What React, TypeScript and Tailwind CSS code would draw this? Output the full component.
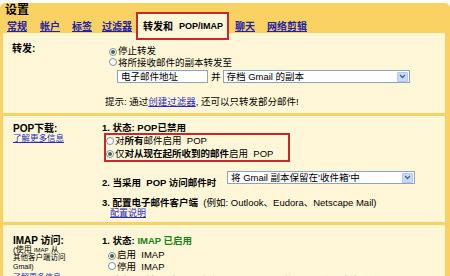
import React from "react";

const Radio = ({ checked }: { checked?: boolean }) => (
  <span className="inline-flex h-[8px] w-[8px] shrink-0 items-center justify-center rounded-full border border-[#7d8fa6] bg-white">
    {checked && <span className="h-[4px] w-[4px] rounded-full bg-[#3a6b3a]" />}
  </span>
);

const Select = ({ text, className }: { text: string; className: string }) => (
  <div
    className={`flex items-center border border-[#8ea3bd] bg-white ${className}`}
  >
    <span className="flex-1 whitespace-nowrap pl-[3px] text-[9.5px] leading-[11px]">
      {text}
    </span>
    <span className="mr-[1px] flex h-[10px] w-[11px] items-center justify-center rounded-[1px] border border-[#b4c8ef] bg-[#c9d9f9]">
      <svg width="7" height="5" viewBox="0 0 7 5">
        <path d="M1 1l2.5 2.5L6 1" stroke="#4d6185" strokeWidth="1.3" fill="none" />
      </svg>
    </span>
  </div>
);

const tabLink = "text-[#2020a8] underline";
const link = "text-[#2a2ac0] underline";

export default function App() {
  return (
    <div className="relative h-[276px] w-[450px] overflow-hidden bg-white font-['Liberation_Sans','Noto_Sans_CJK_SC',sans-serif] text-[9.5px] text-black">
      <div className="mt-[3px] rounded-t-[5px] bg-[#fad163]">
        <div className="h-[15px] pl-[5px] text-[12px] font-bold leading-[14px]">设置</div>
        <div className="flex h-[15px] items-end whitespace-nowrap pl-[7px] text-[10px] font-bold leading-[13px]">
          <a className={tabLink}>常规</a>
          <a className={`ml-[13px] ${tabLink}`}>帐户</a>
          <a className={`ml-[12px] ${tabLink}`}>标签</a>
          <a className={`ml-[10px] ${tabLink}`}>过滤器</a>
          <div className="ml-[4px] flex h-[19px] w-[93px] shrink-0 items-end rounded-t-[3px] bg-[#fff7d7] pl-[7px]">
            <span>转发和</span>
            <span className="ml-[6px] text-[9px]">POP/IMAP</span>
          </div>
          <a className={`ml-[6px] ${tabLink}`}>聊天</a>
          <a className={`ml-[12px] ${tabLink}`}>网络剪辑</a>
        </div>

        <div className="ml-[3px] mr-[5px] bg-[#fff7d7]">
          {/* 转发 */}
          <div className="flex h-[83px] border-b-[3px] border-[#fad163]">
            <div className="w-[99px] shrink-0 pl-[9px] pt-[10px] text-[10px] font-bold leading-[12px]">
              转发:
            </div>
            <div className="flex-1 pt-[12px] leading-[12px]">
              <div className="flex h-[12px] items-center">
                <span className="ml-[7px]"><Radio checked /></span>
                <span className="ml-[1px]">停止转发</span>
              </div>
              <div className="flex h-[12px] items-center">
                <span className="ml-[7px]"><Radio /></span>
                <span className="ml-[1px]">将所接收邮件的副本转发至</span>
              </div>
              <div className="mt-[1px] flex items-center">
                <div className="ml-[15px] h-[13px] w-[91px] border border-[#8ea3bd] bg-white pl-[3px] leading-[11px]">
                  电子邮件地址
                </div>
                <span className="ml-[3px]">并</span>
                <Select text="存档 Gmail 的副本" className="ml-[2px] h-[13px] w-[187px]" />
              </div>
              <div className="ml-[3px] mt-[13px]">
                提示: 通过<a className={link}>创建过滤器</a>, 还可以只转发部分邮件!
              </div>
            </div>
          </div>

          {/* POP */}
          <div className="flex h-[109px] border-b-[3px] border-[#fad163]">
            <div className="w-[99px] shrink-0 pl-[10px] pt-[7px]">
              <div className="text-[10px] font-bold leading-[11px]">POP下载:</div>
              <a className={`block text-[8.5px] leading-[8px] ${link}`}>了解更多信息</a>
            </div>
            <div className="flex-1 pt-[6px] leading-[12px]">
              <div className="font-bold">1. 状态: POP已禁用</div>
              <div className="-mt-[1px] ml-[2px] w-[186px] border-2 border-[#c8282a]">
                <div className="flex h-[12px] items-center">
                  <Radio />
                  <span className="ml-[1px]">
                    对<b>所有</b>邮件启用&nbsp;&nbsp;POP
                  </span>
                </div>
                <div className="flex h-[13px] items-center">
                  <Radio checked />
                  <span className="ml-[1px]">
                    仅<b>对从现在起所收到的邮件</b>启用&nbsp;&nbsp;POP
                  </span>
                </div>
              </div>
              <div className="mt-[9px] flex items-start">
                <div className="mt-[6px] w-[125px] shrink-0 font-bold">
                  2. 当采用&nbsp;&nbsp;POP 访问邮件时
                </div>
                <Select text="将 Gmail 副本保留在'收件箱'中" className="h-[13px] w-[188px]" />
              </div>
              <div className="mt-[8px] whitespace-nowrap">
                <b>3. 配置电子邮件客户端</b>&nbsp;&nbsp;(例如: Outlook、Eudora、Netscape Mail)
              </div>
              <a className={`ml-[8px] block text-[9px] leading-[9px] ${link}`}>配置说明</a>
            </div>
          </div>

          {/* IMAP */}
          <div className="flex h-[60px]">
            <div className="w-[99px] shrink-0 pl-[10px] pt-[10px]">
              <div className="text-[10px] font-bold leading-[11px]">IMAP 访问:</div>
              <div className="text-[8px] leading-[8px]">
                (使用 <span className="text-[6px]">IMAP</span> 从
              </div>
              <div className="text-[7.5px] leading-[8px]">其他客户端访问</div>
              <div className="text-[7px] leading-[10px]">Gmail)</div>
              <a className={`mt-[2px] block text-[8px] leading-[8px] ${link}`}>了解更多信息</a>
            </div>
            <div className="flex-1 pt-[10px] leading-[12px]">
              <div className="font-bold">
                1. 状态: <span className="text-[#1a801a]">IMAP 已启用</span>
              </div>
              <div className="mt-[2px] flex h-[12px] items-center">
                <span className="ml-[6px]"><Radio checked /></span>
                <span className="ml-[1px]">启用&nbsp;&nbsp;IMAP</span>
              </div>
              <div className="flex h-[12px] items-center">
                <span className="ml-[6px]"><Radio /></span>
                <span className="ml-[1px]">停用&nbsp;&nbsp;IMAP</span>
              </div>
              <div className="mt-[2px] whitespace-nowrap font-bold">
                2. 当邮件被标记为已删除并从最后一个可见的 IMAP 文件夹中删除时:
              </div>
            </div>
          </div>
        </div>
      </div>

      <div className="absolute left-[136px] top-[12px] h-[28px] w-[93px] border-2 border-[#c8282a]" />
    </div>
  );
}
